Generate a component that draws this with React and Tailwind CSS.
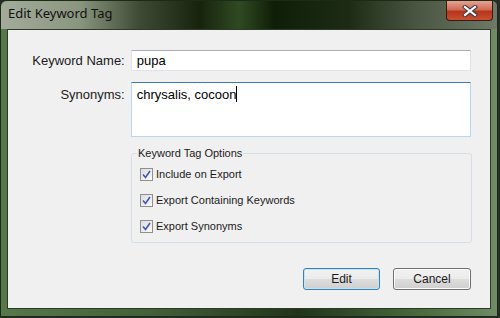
import React from 'react';

function CheckRow({ label }) {
  return (
    <div className="flex items-center h-[13px] gap-[3px]">
      <span className="w-[13px] h-[13px] border border-[#8f8f8f] bg-[linear-gradient(135deg,#dcdcdc,#fafafa)] flex items-center justify-center">
        <svg width="9" height="9" viewBox="0 0 9 9">
          <path d="M1 4.5 L3.5 7.5 L8 1" fill="none" stroke="#3f56b8" strokeWidth="1.6" />
        </svg>
      </span>
      <span className="text-[11px] text-[#1a1a1a] leading-none">{label}</span>
    </div>
  );
}

function Button({ label, isDefault }) {
  return (
    <button
      className={
        'h-[22px] rounded-[3px] text-[12px] text-[#1a1a1a] bg-[linear-gradient(180deg,#f2f2f2_0%,#ebebeb_50%,#dddddd_51%,#cfcfcf_100%)] ' +
        (isDefault
          ? 'w-[77px] border border-[#3c7fb1] shadow-[inset_0_0_0_1px_#bfe6f8]'
          : 'w-[78px] border border-[#707070] shadow-[inset_0_0_0_1px_#fcfcfc]')
      }
    >
      {label}
    </button>
  );
}

export default function App() {
  return (
    <div className="w-[500px] h-[318px] bg-[#2a2a2a] font-['Liberation_Sans',sans-serif]">
      <div className="w-[498px] h-[317px] flex flex-col rounded-t-[6px] border border-[#1c2a18] bg-[linear-gradient(90deg,#56784b_0%,#44603a_30%,#20341a_60%,#4b6b3f_85%,#6f8c66_100%)]">
        <div className="h-[28px] flex items-start justify-between rounded-t-[6px] bg-[linear-gradient(90deg,#a3ac9b_0%,#8a957f_16%,#3e4a33_28%,#17230d_40%,#2f4a22_48%,#0f1f07_55%,#1d2b14_70%,#4a5642_84%,#6e7a67_100%)]">
          <span className="pl-[7px] pt-[6px] text-[13px] text-[#111] font-['Noto_Sans',sans-serif] leading-none">Edit Keyword Tag</span>
          <div className="mr-[4px] w-[47px] h-[20px] rounded-b-[4px] border border-t-0 border-[#3a1a14] bg-[linear-gradient(180deg,#e6a393_0%,#cf6c55_45%,#b7341c_55%,#c8502f_100%)] flex items-center justify-center">
            <svg width="16" height="12" viewBox="0 0 16 12">
              <path d="M3 2 L13 10 M13 2 L3 10" stroke="#3b3b4a" strokeWidth="4.2" strokeLinecap="square" />
              <path d="M3 2 L13 10 M13 2 L3 10" stroke="#fff" strokeWidth="2.2" strokeLinecap="square" />
            </svg>
          </div>
        </div>
        <div className="flex-1 mx-[6px] mb-[7px] border border-[#2c3a28] bg-[#f0f0f0] flex flex-col pt-[20px] pr-[19px]">
          <div className="flex items-center gap-[6px]">
            <span className="w-[117px] text-right text-[13px] text-[#1a1a1a]">Keyword Name:</span>
            <div className="w-[341px] h-[21px] bg-white border border-[#e2e3ea] border-t-[#abadb3] flex items-center px-[5px] text-[13px] text-black">pupa</div>
          </div>
          <div className="flex items-start gap-[6px] mt-[11px]">
            <span className="w-[117px] text-right text-[13px] text-[#1a1a1a] pt-[3px]">Synonyms:</span>
            <div className="w-[341px] h-[55px] bg-white border border-[#b5d8ee] border-t-[#3d7bad] px-[5px] pt-[2px] text-[13px] text-black flex items-start">
              <span>chrysalis, cocoon</span>
              <span className="w-px h-[16px] bg-black mt-[1px]"></span>
            </div>
          </div>
          <fieldset className="ml-[123px] mt-[10px] w-[341px] h-[96px] border border-[#d5dfe5] rounded-[3px] pl-[8px] pt-[8px] flex flex-col gap-[13px]">
            <legend className="-ml-[3px] px-[1px] text-[11px] text-[#1a1a1a] leading-[13px]">Keyword Tag Options</legend>
            <CheckRow label="Include on Export" />
            <CheckRow label="Export Containing Keywords" />
            <CheckRow label="Export Synonyms" />
          </fieldset>
          <div className="flex justify-end gap-[13px] mt-[25px]">
            <Button label="Edit" isDefault />
            <Button label="Cancel" />
          </div>
        </div>
      </div>
    </div>
  );
}
